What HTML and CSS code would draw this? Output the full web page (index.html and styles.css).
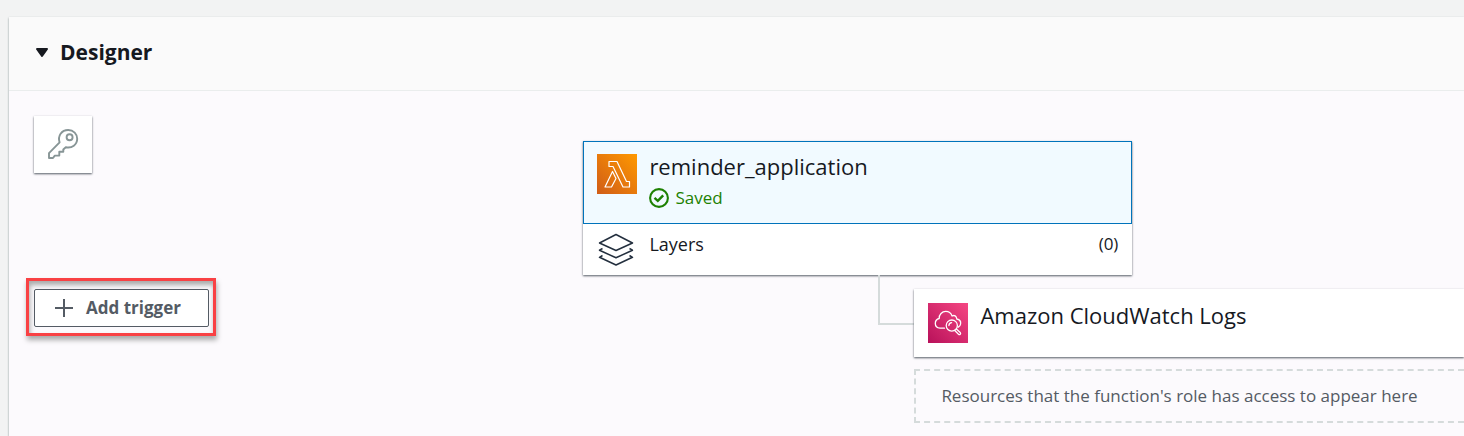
FILE: index.html
```html
<!DOCTYPE html>
<html lang="en">
<head>
<meta charset="utf-8">
<title>Designer</title>
<link rel="stylesheet" href="styles.css">
</head>
<body>
<main class="panel">
  <header class="panel-header">
    <svg class="caret" viewBox="0 0 14 12" aria-hidden="true"><path d="M2 3h10L7 10z" fill="#16191f" stroke="#16191f" stroke-width="2" stroke-linejoin="round"/></svg>
    <h2 class="panel-title">Designer</h2>
  </header>
  <div class="panel-body">
    <section class="triggers">
      <button class="key-button" type="button" aria-label="Permissions">
        <svg class="key-icon" viewBox="0 0 32 32" fill="none" stroke="#879596" stroke-width="1.900" stroke-linejoin="round" aria-hidden="true">
          <path d="M12.600 14.400C10.500 8 14.500 2 21.200 2C26.500 2 30.200 6 30.200 10.800C30.200 16.500 25 20.600 18.800 19.200L16.300 21.500V23.700H12.300V27.600H7.800L6 30H2V25.200Z"/>
          <circle cx="22.600" cy="9.200" r="3"/>
        </svg>
      </button>
      <div class="highlight">
        <button class="add-trigger" type="button">
          <svg class="plus" viewBox="0 0 18 18" aria-hidden="true"><path d="M9 0v18M0 9h18" stroke="#545b64" stroke-width="2"/></svg>
          <span>Add trigger</span>
        </button>
      </div>
    </section>
    <section class="diagram">
      <article class="function-card">
        <div class="function-main">
          <svg class="service-icon" viewBox="0 0 40 40" aria-hidden="true">
            <defs><linearGradient id="orange" x1="0" y1="1" x2="1" y2="0"><stop offset="0" stop-color="#d05c17"/><stop offset="1" stop-color="#f90"/></linearGradient></defs>
            <path d="M0 0h40v40H0z" fill="url(#orange)"/>
            <path d="M12 7.500H20L29.500 27.500H32.500V33H26L16 12.500H12ZM15.500 17.500L19 24.500L14.500 33H8Z" fill="none" stroke="#fff" stroke-width="1.200" stroke-linejoin="round"/>
          </svg>
          <div class="function-info">
            <h3 class="card-title">reminder_application</h3>
            <p class="status">
              <svg class="check" viewBox="0 0 20 20" fill="none" stroke="#1d8102" aria-hidden="true"><circle cx="10" cy="10" r="8.900" stroke-width="2.100"/><path d="M5.500 9.800L8.800 12.800L14.200 7.300" stroke-width="2.400"/></svg>
              <span>Saved</span>
            </p>
          </div>
        </div>
        <div class="layers">
          <svg class="layers-icon" viewBox="0 0 40 36" fill="none" stroke="#232f3e" stroke-width="1.500" stroke-linejoin="round" aria-hidden="true">
            <path d="M20 2.500L36.500 11L20 18.500L3.500 11ZM6.500 16.500L3.500 18.200L20 25.800L36.500 18.200L33.500 16.500M6.500 23.500L3.500 25.300L20 33L36.500 25.300L33.500 23.500"/>
          </svg>
          <span class="layers-label">Layers</span>
          <span class="layers-count">(0)</span>
        </div>
      </article>
      <div class="targets">
        <div class="connector"></div>
        <div class="resources">
          <article class="resource-card">
            <svg class="service-icon" viewBox="0 0 40 40" aria-hidden="true">
              <defs><linearGradient id="pink" x1="0" y1="1" x2="1" y2="0"><stop offset="0" stop-color="#b8115a"/><stop offset="1" stop-color="#f54783"/></linearGradient></defs>
              <path d="M0 0h40v40H0z" fill="url(#pink)"/>
              <g fill="none" stroke="#fff" stroke-width="1.300" stroke-linecap="round" stroke-linejoin="round">
                <path d="M16.500 25.200H12C8.800 24.700 7.300 22.800 7.300 20.400C7.300 17.700 9 16 11.200 15.500C11 11.500 14 8.400 17.800 8.400C21 8.400 23 10.200 24.100 13C26.300 11.700 28.500 13 28.800 16C31.500 16.500 33 18.500 32.600 21C32.400 22.500 31.500 23.600 30.200 24.200"/>
                <circle cx="23.800" cy="22.600" r="5.600"/>
                <path d="M20.900 22.500C21 20.900 22 19.800 23.600 19.600M26.800 27.500L30.500 31.200C31.800 32.300 33.300 30.700 32.200 29.400L28.400 25.900"/>
              </g>
            </svg>
            <h3 class="card-title">Amazon CloudWatch Logs</h3>
          </article>
          <p class="placeholder">Resources that the function's role has access to appear here</p>
        </div>
      </div>
    </section>
  </div>
</main>
</body>
</html>
```
FILE: styles.css
```css
* { box-sizing: border-box; }
body {
  margin: 0;
  padding: 17px 0 0 9px;
  background: #f2f3f3;
  color: #16191f;
  font: 17px/24px "Open Sans", "Noto Sans", sans-serif;
  overflow: hidden;
}
h2, h3, p { margin: 0; font-weight: 400; }
button { font: inherit; margin: 0; padding: 0; cursor: pointer; }
svg { display: block; flex: none; }
.panel {
  min-height: calc(100vh - 17px);
  background: #fcfafd;
  box-shadow: 0 1px 2px #879596;
}
.panel-header {
  display: flex;
  align-items: center;
  gap: 11px;
  height: 74px;
  padding: 0 0 3px 26px;
  background: #fafafa;
  border-bottom: 1px solid #eaeded;
}
.caret { width: 14px; height: 12px; }
.panel-title { font-size: 21px; line-height: 28px; font-weight: 700; }
.panel-body {
  display: grid;
  grid-template-columns: 5fr 8fr;
  align-items: start;
  padding-left: 24px;
}
.triggers { padding: 25px 0 0 1px; }
.key-button {
  display: grid;
  place-items: center;
  width: 58px;
  height: 57px;
  padding-bottom: 2px;
  background: #fff;
  border: 0;
  box-shadow: 0 1px 2px #545b64;
}
.key-icon { width: 32px; height: 32px; }
.highlight {
  width: fit-content;
  margin: 105px 0 0 -8px;
  padding: 8px 4px 6px 5px;
  border: 3px solid #f94144;
  box-shadow: 1px 4px 5px #aaa, inset 1px 4px 5px #aaa;
}
.add-trigger {
  display: flex;
  align-items: center;
  gap: 13px;
  height: 38px;
  padding: 0 27px 0 20px;
  border: 1px solid #545b64;
  border-radius: 2px;
  background: #fff;
  color: #545b64;
  font-weight: 700;
}
.plus { width: 18px; height: 18px; }
.diagram { padding-top: 50px; min-width: 0; }
.function-card {
  max-width: 549px;
  background: #fff;
  box-shadow: 0 1px 2px #545b64;
}
.function-main {
  display: flex;
  gap: 12px;
  height: 83px;
  padding: 12px 13px;
  border: 1px solid #0073bb;
  background: #f1faff;
}
.service-icon { width: 40px; height: 40px; }
.card-title { font-size: 22px; line-height: 24px; }
.status {
  display: flex;
  align-items: center;
  gap: 6px;
  margin-top: 8px;
  color: #1d8102;
}
.check { width: 20px; height: 20px; }
.layers {
  display: flex;
  gap: 13px;
  height: 51px;
  padding: 8px 14px 8px 13px;
}
.layers-icon { width: 40px; height: 36px; }
.layers-label { flex: 1; font-size: 18px; }
.targets { display: flex; padding-left: 295px; }
.connector {
  width: 36px;
  height: 50px;
  border: solid #d5dbdb;
  border-width: 0 0 2px 2px;
}
.resources { flex: 1; min-width: 0; padding-top: 14px; }
.resource-card {
  display: flex;
  gap: 12px;
  height: 68px;
  padding: 14px 14px 13px;
  background: #fff;
  box-shadow: 0 1px 2px #545b64;
}
.placeholder {
  margin-top: 12px;
  padding: 13px 25px;
  border: 2px dashed #d5dbdb;
  border-right: 0;
  color: #545b64;
  white-space: nowrap;
}
```
